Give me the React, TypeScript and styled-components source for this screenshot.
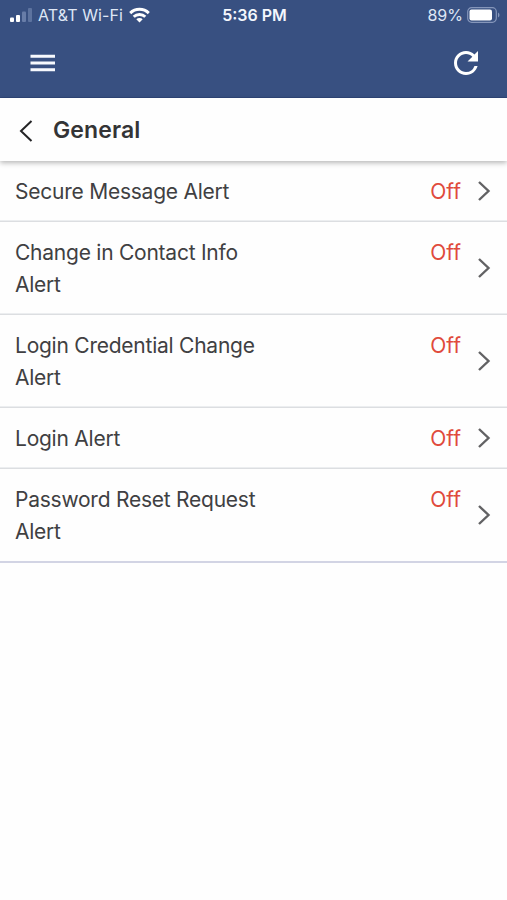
import React from "react";
import styled, { createGlobalStyle } from "styled-components";

const GlobalStyle = createGlobalStyle`
  * { box-sizing: border-box; }
  body {
    margin: 0;
    background: #fefefe;
    font-family: Inter, "Liberation Sans", sans-serif;
  }
`;

const Screen = styled.main`
  min-height: 900px;
  background: #fefefe;
`;

const TopArea = styled.header`
  height: 98px;
  background: #385081;
  border-bottom: 1px solid #2f4678;
  color: #f4f7fd;
`;

const StatusBar = styled.div`
  display: grid;
  grid-template-columns: 1fr auto 1fr;
  align-items: center;
  height: 30px;
  padding: 0 7px 0 9px;
  font-size: 16px;
  line-height: 30px;
`;

const Carrier = styled.div`
  display: flex;
  align-items: center;
  color: #dfe7f5;
  letter-spacing: 0.1px;
`;

const CarrierName = styled.span`
  margin: 0 6px 0 5px;
`;

const Clock = styled.time`
  font-weight: 600;
`;

const Power = styled.div`
  display: flex;
  align-items: center;
  justify-content: flex-end;
  gap: 4px;
  color: #dfe7f5;
`;

const NavBar = styled.nav`
  display: flex;
  align-items: center;
  justify-content: space-between;
  height: 66px;
  padding: 0 29px 0 30px;
`;

const IconButton = styled.button`
  display: flex;
  padding: 0;
  border: 0;
  background: none;
  color: inherit;
`;

const TitleBar = styled.div`
  position: relative;
  display: flex;
  align-items: center;
  height: 63px;
  padding: 2px 0 0 19px;
  background: #fefefe;
  box-shadow: 0 2px 5px rgba(0, 0, 0, 0.28);
  color: #343436;
`;

const Title = styled.h1`
  margin: 0 0 2px 19px;
  font-size: 23px;
  font-weight: 600;
  line-height: 32px;
  letter-spacing: 0.1px;
`;

const AlertList = styled.ul`
  margin: 0;
  padding: 0;
  list-style: none;
`;

const AlertRow = styled.li`
  display: flex;
  align-items: center;
  padding: 14px 16px 14px 15px;
  border-bottom: 1px solid #dcdee1;
  box-shadow: 0 -1px 0 #eceef0 inset;
  color: #404042;
  font-size: 21px;
  line-height: 32px;

  &:last-child {
    border-bottom: 2px solid #d2d4e4;
    box-shadow: none;
  }
`;

const AlertName = styled.span`
  width: 260px;
  padding-top: 1px;
  margin-bottom: -1px;
  letter-spacing: -0.24px;
`;

const AlertState = styled.span`
  align-self: flex-start;
  padding-top: 1px;
  margin: 0 16px -1px auto;
  color: #e04a3c;
`;

const alerts = [
  "Secure Message Alert",
  "Change in Contact Info Alert",
  "Login Credential Change Alert",
  "Login Alert",
  "Password Reset Request Alert",
];

const SignalIcon = () => (
  <svg width="24" height="16" viewBox="0 0 24 16">
    <rect x="1" y="10.5" width="4" height="4.5" rx="1" fill="#fff" />
    <rect x="7" y="8" width="4" height="7" rx="1" fill="#fff" />
    <rect x="13" y="4.5" width="4" height="10.5" rx="1" fill="#687da8" />
    <rect x="19" y="1" width="4" height="14" rx="1" fill="#5d739f" />
  </svg>
);

const WifiIcon = () => (
  <svg width="21" height="16" viewBox="0 0 21 16" fill="none" stroke="#fff" strokeWidth="2.9">
    <path d="M1.2 6.1a13.3 13.3 0 0 1 18.6 0" />
    <path d="M4.7 9.8a8.3 8.3 0 0 1 11.6 0" />
    <path d="M10.5 15.5 7.3 12.3a4.6 4.6 0 0 1 6.4 0Z" fill="#fff" stroke="none" />
  </svg>
);

const BatteryIcon = () => (
  <svg width="33" height="16" viewBox="0 0 33 16">
    <rect x="0.7" y="0.7" width="28.6" height="14.6" rx="4" fill="none" stroke="#8596ba" strokeWidth="1.2" />
    <rect x="2.5" y="2.5" width="22.5" height="11" rx="2" fill="#fff" />
    <path d="M31 5.5c2 1 2 4 0 5Z" fill="#8596ba" />
  </svg>
);

const MenuIcon = () => (
  <svg width="26" height="20" viewBox="0 0 26 20" stroke="#f7f9fe" strokeWidth="3">
    <path d="M.5 3.3h24.500M.5 10h24.500M.5 16.7h24.500" />
  </svg>
);

const RefreshIcon = () => (
  <svg width="24" height="24" viewBox="4 4 16 16" fill="#fff">
    <path d="M17.65 6.35A7.96 7.96 0 0 0 12 4c-4.42 0-7.99 3.58-7.99 8s3.57 8 7.99 8c3.73 0 6.84-2.55 7.73-6h-2.08A5.99 5.99 0 0 1 12 18c-3.31 0-6-2.69-6-6s2.69-6 6-6c1.66 0 3.14.69 4.22 1.78L13 11h7V4z" />
  </svg>
);

const BackIcon = () => (
  <svg width="15" height="24" viewBox="0 0 15 24" fill="none" stroke="#242426" strokeWidth="2">
    <path d="M12.5 2 2 12l10.500 10" />
  </svg>
);

const ChevronIcon = () => (
  <svg width="14" height="22" viewBox="0 0 14 22" fill="none" stroke="#626264" strokeWidth="2.4">
    <path d="m2 2 9.500 9L2 20" />
  </svg>
);

export default function App() {
  return (
    <Screen>
      <GlobalStyle />
      <TopArea>
        <StatusBar>
          <Carrier>
            <SignalIcon />
            <CarrierName>AT&amp;T Wi-Fi</CarrierName>
            <WifiIcon />
          </Carrier>
          <Clock>5:36 PM</Clock>
          <Power>
            <span>89%</span>
            <BatteryIcon />
          </Power>
        </StatusBar>
        <NavBar>
          <IconButton aria-label="Menu"><MenuIcon /></IconButton>
          <IconButton aria-label="Refresh"><RefreshIcon /></IconButton>
        </NavBar>
      </TopArea>
      <TitleBar>
        <IconButton aria-label="Back"><BackIcon /></IconButton>
        <Title>General</Title>
      </TitleBar>
      <AlertList>
        {alerts.map((name) => (
          <AlertRow key={name}>
            <AlertName>{name}</AlertName>
            <AlertState>Off</AlertState>
            <ChevronIcon />
          </AlertRow>
        ))}
      </AlertList>
    </Screen>
  );
}
